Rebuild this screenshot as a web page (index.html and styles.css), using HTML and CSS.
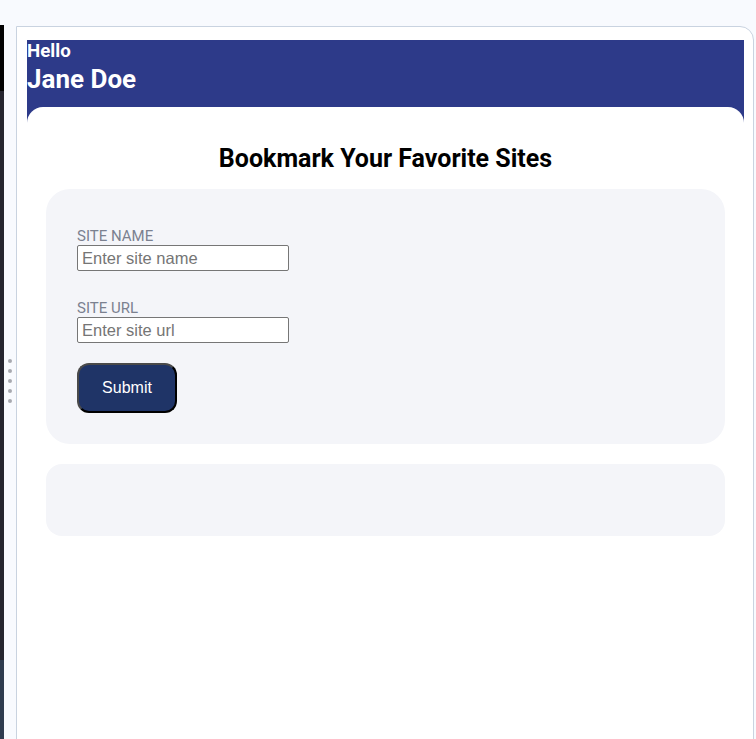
FILE: index.html
```html
<!DOCTYPE html>
<html lang="en">
<head>
<meta charset="utf-8">
<title>Bookmark Your Favorite Sites</title>
<link rel="stylesheet" href="styles.css">
</head>
<body>
  <div class="strip">
    <div class="strip-top"></div>
    <div class="strip-mid"></div>
    <div class="strip-bottom"></div>
  </div>
  <div class="gutter">
    <div class="handle">
      <span class="dot"></span><span class="dot"></span><span class="dot"></span><span class="dot"></span><span class="dot"></span>
    </div>
  </div>
  <div class="frame">
    <div class="app">
      <header class="greeting">
        <div class="hello">Hello</div>
        <div class="name">Jane Doe</div>
      </header>
      <main class="content">
        <h1 class="title">Bookmark Your Favorite Sites</h1>
        <form class="form-card">
          <label class="field-label" for="site-name">SITE NAME</label>
          <input class="field-input" id="site-name" type="text" placeholder="Enter site name">
          <label class="field-label second" for="site-url">SITE URL</label>
          <input class="field-input" id="site-url" type="text" placeholder="Enter site url">
          <button class="submit" type="button">Submit</button>
        </form>
        <section class="list-card"></section>
      </main>
    </div>
  </div>
</body>
</html>
```
FILE: styles.css
```css
html, body {
  margin: 0;
  padding: 0;
  height: 739px;
  overflow: hidden;
}
body {
  background: #f8fafe;
  display: flex;
  align-items: flex-start;
  padding-top: 25px;
  box-sizing: border-box;
  font-family: Roboto, "Liberation Sans", sans-serif;
}
.strip {
  width: 4px;
  height: 714px;
  display: flex;
  flex-direction: column;
  flex-shrink: 0;
}
.strip-top { height: 66px; background: #020202; }
.strip-mid { height: 569px; background: #25252f; }
.strip-bottom { flex: 1; background: #2e3b4f; }
.gutter {
  width: 12px;
  height: 714px;
  flex-shrink: 0;
  display: flex;
  justify-content: center;
  padding-top: 334px;
  box-sizing: border-box;
}
.handle {
  display: flex;
  flex-direction: column;
  gap: 6px;
}
.dot {
  width: 4px;
  height: 4px;
  border-radius: 50%;
  background: #a8a9b0;
}
.frame {
  margin-top: 1px;
  width: 738px;
  height: 800px;
  box-sizing: border-box;
  background: #ffffff;
  border: 1px solid #c9d3e0;
  border-radius: 0 14px 0 0;
  padding: 13px 9px 0 10px;
  flex-shrink: 0;
}
.app {
  background: #2d3a89;
  height: 100%;
  display: flex;
  flex-direction: column;
}
.greeting {
  color: #ffffff;
  font-weight: 700;
  padding-bottom: 11px;
}
.hello {
  font-size: 18.72px;
  line-height: 22px;
}
.name {
  font-size: 26px;
  line-height: 34px;
}
.content {
  flex: 1;
  background: #ffffff;
  border-radius: 16px 16px 0 0;
  padding: 38px 19px 0 19px;
}
.title {
  margin: 0 0 16px;
  text-align: center;
  font-size: 25px;
  line-height: 28px;
  font-weight: 700;
  color: #000000;
}
.form-card {
  background: #f4f5f9;
  border-radius: 24px;
  padding: 38px 30px 31px 31px;
  display: flex;
  flex-direction: column;
  align-items: flex-start;
  margin: 0;
}
.field-label {
  font-size: 15px;
  line-height: 18px;
  color: #7b8190;
  display: block;
}
.field-label.second {
  margin-top: 28px;
}
.field-input {
  width: 212px;
  height: 26px;
  box-sizing: border-box;
  border: 1px solid #767676;
  border-radius: 2px;
  padding: 1px 4px;
  font-family: "Liberation Sans", Arial, sans-serif;
  font-size: 16.5px;
  background: #ffffff;
  color: #000;
  margin: 0;
}
.field-input::placeholder {
  color: #757575;
}
.submit {
  margin-top: 20px;
  width: 100px;
  height: 50px;
  box-sizing: border-box;
  background: #1f3467;
  color: #ffffff;
  border: 2px solid;
  border-color: #4a4a4a #000000 #000000 #4a4a4a;
  border-radius: 12px;
  font-family: "Liberation Sans", Arial, sans-serif;
  font-size: 16px;
}
.list-card {
  margin-top: 20px;
  height: 72px;
  background: #f4f5f9;
  border-radius: 16px;
}
```
